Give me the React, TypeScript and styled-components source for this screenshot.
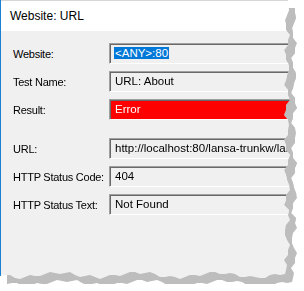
import React from 'react'
import styled, { createGlobalStyle } from 'styled-components'

const GlobalStyle = createGlobalStyle`
  html,
  body {
    margin: 0;
    background: #ffffff;
  }
  body {
    font-family: 'Liberation Sans', Arial, sans-serif;
  }
`

const WIN_W = 300
const WIN_H = 284

// torn-paper outline for the right and bottom edges
function tornEdge() {
  const pts: string[] = ['0px 0px']
  for (let y = 0; y <= 274; y += 5) {
    const x = 287 + Math.round(2.2 * Math.sin(y * 0.21) + 1.4 * Math.sin(y * 0.57 + 1))
    pts.push(`${x}px ${y}px`)
  }
  for (let x = 285; x >= 0; x -= 5) {
    const y = 275 + Math.round(2.4 * Math.sin(x * 0.08) + 1.5 * Math.sin(x * 0.31 + 2))
    pts.push(`${x}px ${y}px`)
  }
  return `polygon(${pts.join(', ')})`
}

const TORN = tornEdge()

const Shadow = styled.div`
  width: ${WIN_W}px;
  height: ${WIN_H}px;
  filter: drop-shadow(7px 8px 0.6px #bdbdbd);
`

const Window = styled.div`
  width: ${WIN_W}px;
  height: ${WIN_H}px;
  background: #f0f0f0;
  border-left: 1px solid #1b7fd4;
  box-sizing: border-box;
  clip-path: ${TORN};
  display: flex;
  flex-direction: column;
`

const TitleBar = styled.div`
  height: 31px;
  box-sizing: border-box;
  background: #ffffff;
  border-top: 1px solid #d6d6d6;
  display: flex;
  align-items: center;
  padding-left: 9px;
  font-size: 12px;
  color: #000000;
`

const Form = styled.div`
  display: grid;
  grid-template-columns: 96px 1fr;
  row-gap: 7px;
  padding: 12px 0 0 12px;
  align-items: center;
`

const Spacer = styled.div`
  grid-column: 1 / -1;
  height: 4px;
`

const Label = styled.div`
  font-size: 11px;
  letter-spacing: -0.25px;
  color: #000000;
  white-space: nowrap;
`

const Field = styled.div<{ $bg?: string; $color?: string }>`
  height: 21px;
  box-sizing: border-box;
  background: ${(p) => p.$bg ?? '#f0f0f0'};
  color: ${(p) => p.$color ?? '#000000'};
  border-top: 1px solid #a0a0a0;
  border-left: 1px solid #a0a0a0;
  border-bottom: 1px solid #ffffff;
  box-shadow: inset 1px 1px 0 #696969;
  padding: 2px 0 0 5px;
  font-size: 11.5px;
  line-height: 15px;
  white-space: nowrap;
  overflow: hidden;
`

const Selected = styled.span`
  background: #0078d7;
  color: #ffffff;
  padding: 0 1px;
  margin-left: -1px;
`

export default function App() {
  return (
    <>
      <GlobalStyle />
      <Shadow>
        <Window>
          <TitleBar>Website: URL</TitleBar>
          <Form>
            <Label>Website:</Label>
            <Field>
              <Selected>&lt;ANY&gt;:80</Selected>
            </Field>
            <Label>Test Name:</Label>
            <Field>URL: About</Field>
            <Label>Result:</Label>
            <Field $bg="#ff0000" $color="#ffffff">
              Error
            </Field>
            <Spacer />
            <Label>URL:</Label>
            <Field>http://localhost:80/lansa-trunkw/lansa?wam=about</Field>
            <Label>HTTP Status Code:</Label>
            <Field>404</Field>
            <Label>HTTP Status Text:</Label>
            <Field>Not Found</Field>
          </Form>
        </Window>
      </Shadow>
    </>
  )
}
